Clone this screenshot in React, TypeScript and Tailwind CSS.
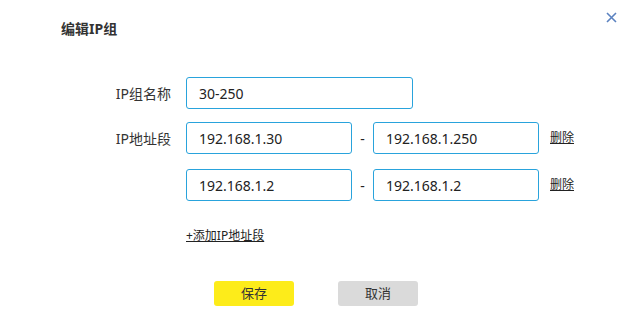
import React, { useState } from 'react'

const font = { fontFamily: '"Noto Sans", "Noto Sans CJK SC", sans-serif' }

type RangeRow = { start: string; end: string }

function RangeInput({ value }: { value: string }) {
  return (
    <input
      defaultValue={value}
      className="h-[32px] w-[166px] rounded-[3px] border border-[#29a3dc] pl-3 text-[14px] text-[#222] outline-none"
    />
  )
}

export default function App() {
  const [rows] = useState<RangeRow[]>([
    { start: '192.168.1.30', end: '192.168.1.250' },
    { start: '192.168.1.2', end: '192.168.1.2' },
  ])

  return (
    <div
      className="relative h-[323px] w-[640px] overflow-hidden bg-white text-[#333]"
      style={font}
    >
      <button
        className="absolute right-[21px] top-[10px] p-0.5 text-[#5b82c0]"
        aria-label="关闭"
      >
        <svg width="11" height="11" viewBox="0 0 11 11" fill="none">
          <path d="M1 1 L10 10 M10 1 L1 10" stroke="currentColor" strokeWidth="1.6" />
        </svg>
      </button>

      <h2 className="pl-[61px] pt-[19px] text-[14px] font-bold leading-5 text-[#333]">
        编辑IP组
      </h2>

      <div className="mt-[38px] pl-[100px]">
        <div className="flex items-center gap-[15px]">
          <span className="w-[71px] text-right text-[14px]">IP组名称</span>
          <input
            defaultValue="30-250"
            className="h-[32px] w-[227px] rounded-[3px] border border-[#29a3dc] pl-3 text-[14px] text-[#222] outline-none"
          />
        </div>

        {rows.map((row, i) => (
          <div
            key={i}
            className={`flex items-center gap-[15px] ${i === 0 ? 'mt-[13px]' : 'mt-[15px]'}`}
          >
            <span className="w-[71px] text-right text-[14px]">
              {i === 0 ? 'IP地址段' : ''}
            </span>
            <div className="flex items-center">
              <RangeInput value={row.start} />
              <span className="w-[21px] text-center text-[14px] text-[#222]">-</span>
              <RangeInput value={row.end} />
              <a className="ml-[11px] cursor-pointer text-[12px] text-[#222] underline">
                删除
              </a>
            </div>
          </div>
        ))}

        <div className="mt-[21px] pl-[86px]">
          <a className="cursor-pointer text-[12px] leading-[18px] text-[#222] underline">
            +添加IP地址段
          </a>
        </div>
      </div>

      <div className="mt-[35px] flex gap-[44px] pl-[214px]">
        <button className="h-[25px] w-[80px] rounded-[3px] bg-[#fdec1a] text-[13px] text-[#333]">
          保存
        </button>
        <button className="h-[25px] w-[80px] rounded-[3px] bg-[#dadada] text-[13px] text-[#333]">
          取消
        </button>
      </div>
    </div>
  )
}
